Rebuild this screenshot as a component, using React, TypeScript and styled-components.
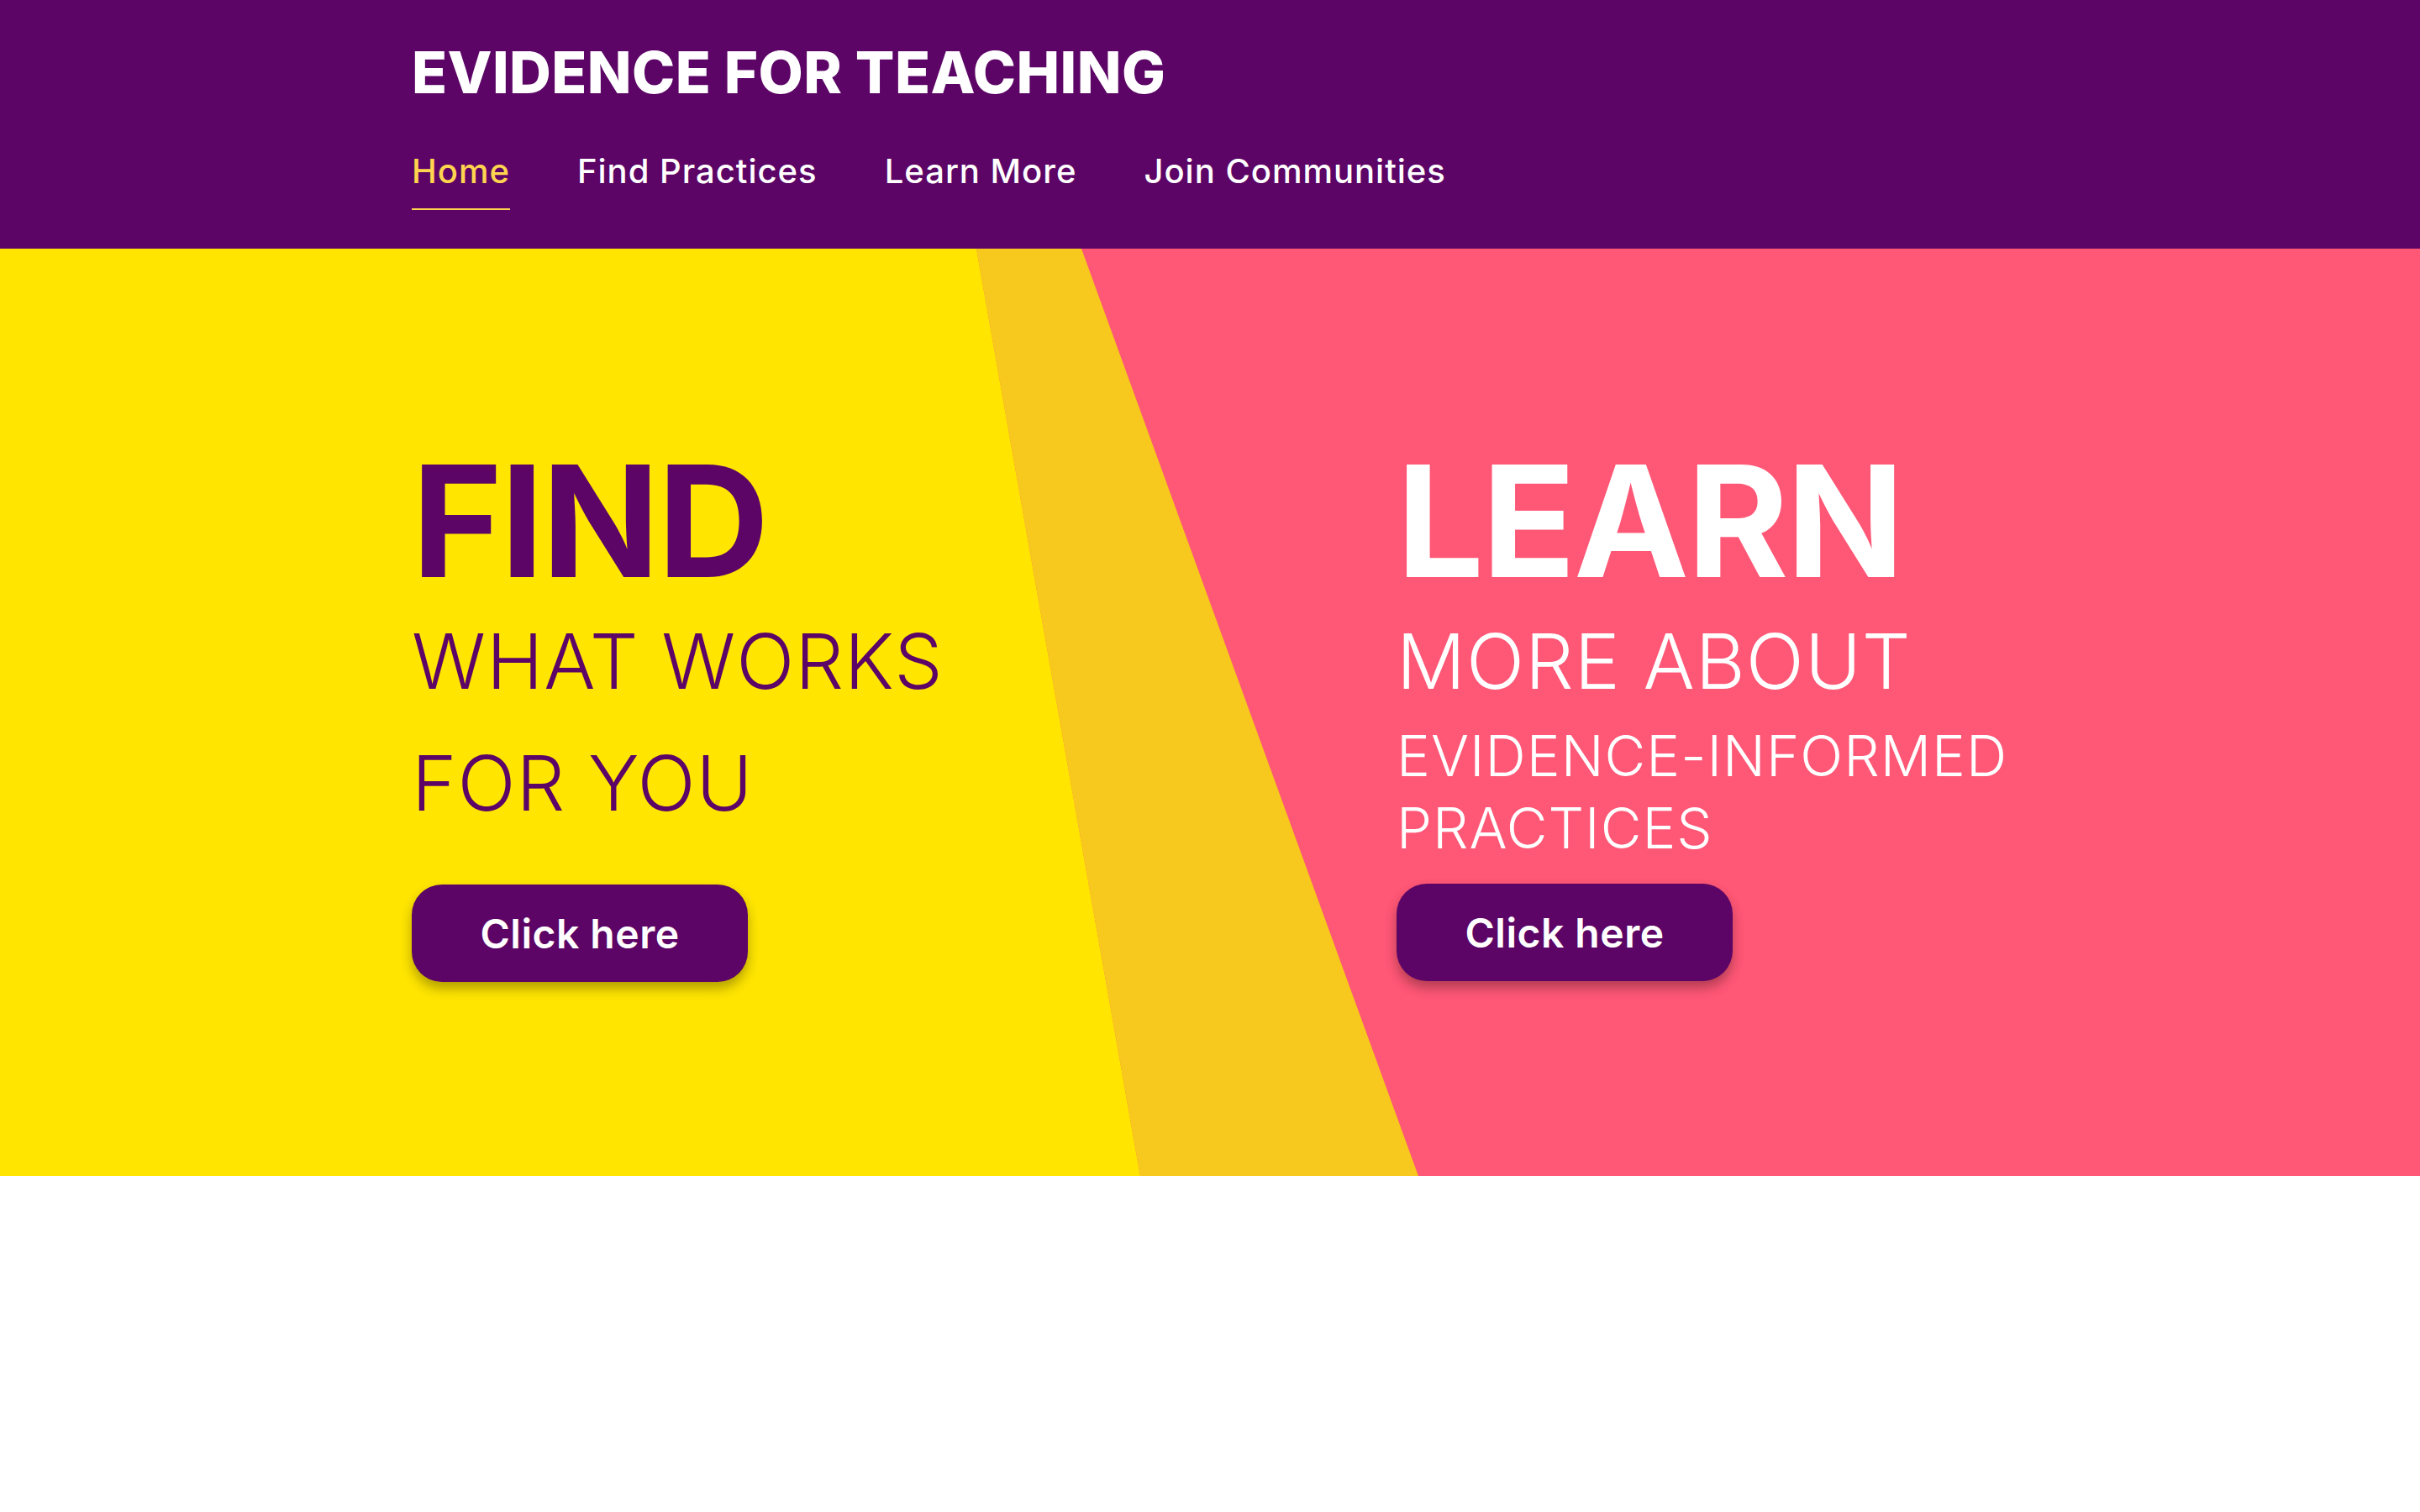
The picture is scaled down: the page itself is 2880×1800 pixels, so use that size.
import React from 'react';
import styled, { createGlobalStyle } from 'styled-components';

const GlobalStyle = createGlobalStyle`
  html, body {
    margin: 0;
    padding: 0;
    background: #ffffff;
    font-family: Inter, "Open Sans", sans-serif;
  }
  * {
    box-sizing: border-box;
  }
`;

const navItems = ['Home', 'Find Practices', 'Learn More', 'Join Communities'];

export default function App() {
  return (
    <Page>
      <GlobalStyle />
      <Header>
        <HeaderInner>
          <Title>EVIDENCE FOR TEACHING</Title>
          <Nav>
            {navItems.map((item, i) => (
              <NavLink key={item} href="#" $active={i === 0}>
                {item}
              </NavLink>
            ))}
          </Nav>
        </HeaderInner>
      </Header>
      <Hero>
        <Backdrop viewBox="0 0 2880 1104" preserveAspectRatio="none">
          <rect x="0" y="0" width="2880" height="1104" fill="#FF5776" />
          <polygon points="1162,0 1287,0 1688,1104 1357,1104" fill="#F7C81D" />
          <polygon points="0,0 1162,0 1357,1104 0,1104" fill="#FFE500" />
        </Backdrop>
        <HeroContent>
          <Column>
            <BigWord $color="#5C0566">FIND</BigWord>
            <SubLine $color="#5C0566">WHAT WORKS<br />FOR YOU</SubLine>
            <CtaButton $offset={48}>Click here</CtaButton>
          </Column>
          <Column>
            <BigWord $color="#ffffff">LEARN</BigWord>
            <SubLine $color="#ffffff">MORE ABOUT</SubLine>
            <SmallLine>EVIDENCE-INFORMED PRACTICES</SmallLine>
            <CtaButton $offset={23}>Click here</CtaButton>
          </Column>
        </HeroContent>
      </Hero>
      <Footer />
    </Page>
  );
}

const Page = styled.div`
  width: 100%;
  min-height: 100vh;
  background: #ffffff;
`;

const Header = styled.header`
  background: #5C0566;
  height: 296px;
`;

const HeaderInner = styled.div`
  padding: 52px 0 0 490px;
  display: flex;
  flex-direction: column;
`;

const Title = styled.h1`
  margin: 0;
  font-size: 69px;
  line-height: 1;
  font-weight: 800;
  color: #ffffff;
  letter-spacing: 0.4px;
`;

const Nav = styled.nav`
  margin-top: 63px;
  display: flex;
  gap: 80px;
`;

const NavLink = styled.a<{ $active?: boolean }>`
  font-size: 40px;
  line-height: 1;
  font-weight: 500;
  letter-spacing: 1px;
  text-decoration: none;
  color: ${(p) => (p.$active ? '#FFD54F' : '#ffffff')};
  padding-bottom: 24px;
  border-bottom: 2px solid ${(p) => (p.$active ? '#FFD54F' : 'transparent')};
`;

const Hero = styled.section`
  position: relative;
  height: 1104px;
  overflow: hidden;
`;

const Backdrop = styled.svg`
  position: absolute;
  inset: 0;
  width: 100%;
  height: 100%;
  display: block;
`;

const HeroContent = styled.div`
  position: relative;
  display: grid;
  grid-template-columns: 1172px 800px;
  padding: 232px 0 0 490px;
`;

const Column = styled.div`
  display: flex;
  flex-direction: column;
  align-items: flex-start;
`;

const BigWord = styled.h2<{ $color: string }>`
  margin: 0;
  font-size: 184px;
  line-height: 1;
  font-weight: 700;
  color: ${(p) => p.$color};
  letter-spacing: -2.5px;
`;

const SubLine = styled.p<{ $color: string }>`
  margin: 3px 0 0;
  font-size: 91px;
  line-height: 145px;
  font-weight: 300;
  letter-spacing: 1px;
  color: ${(p) => p.$color};
`;

const SmallLine = styled.p`
  margin: -3px 0 0;
  max-width: 780px;
  font-size: 67px;
  line-height: 86px;
  font-weight: 300;
  letter-spacing: 1px;
  color: #ffffff;
`;

const CtaButton = styled.button<{ $offset: number }>`
  margin-top: ${(p) => p.$offset}px;
  width: 400px;
  height: 116px;
  border: none;
  border-radius: 36px;
  background: #5C0566;
  color: #ffffff;
  font-family: Inter, "Open Sans", sans-serif;
  font-size: 48px;
  font-weight: 600;
  letter-spacing: 0.5px;
  box-shadow: 0 8px 14px rgba(0, 0, 0, 0.3);
  cursor: pointer;
`;

const Footer = styled.div`
  height: 400px;
  background: #ffffff;
`;
